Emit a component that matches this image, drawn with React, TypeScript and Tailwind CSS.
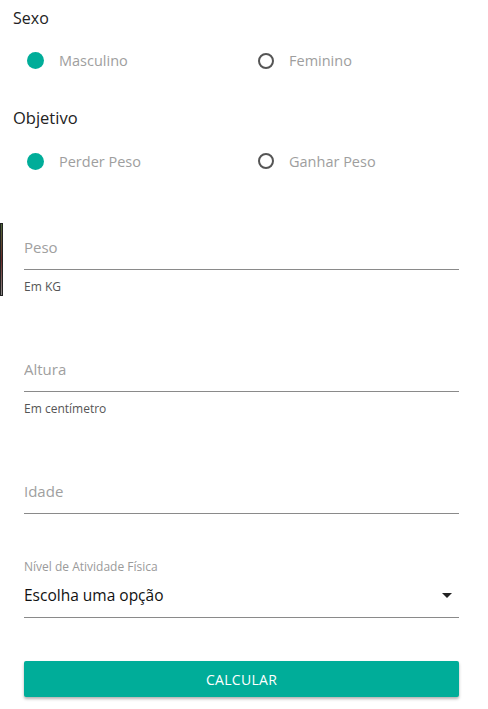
import { useState } from 'react';

type RadioProps = { label: string; checked: boolean; onClick: () => void };

function Radio({ label, checked, onClick }: RadioProps) {
  return (
    <button type="button" onClick={onClick} className="flex items-center gap-[15px] text-left">
      {checked ? (
        <span className="block size-[17px] rounded-full bg-[#00ad99]" />
      ) : (
        <span className="block size-[16px] rounded-full border-2 border-[#555]" />
      )}
      <span className="text-[14.5px] text-[#9e9e9e]">{label}</span>
    </button>
  );
}

function TextField({ label, hint }: { label: string; hint?: string }) {
  return (
    <div className="ml-6 mr-[29px] flex flex-col">
      <input
        placeholder={label}
        className="h-[45px] border-b border-[#8a8a8a] text-[15px] text-[#222] placeholder:text-[#a0a0a0] outline-none"
      />
      <p className="mt-[8px] h-[16px] text-[12px] text-[#555]">{hint}</p>
    </div>
  );
}

export default function App() {
  const [sexo, setSexo] = useState('m');
  const [objetivo, setObjetivo] = useState('perder');

  return (
    <div className="relative min-h-[709px] bg-white pb-3 font-['Open_Sans',sans-serif]">
      <div className="absolute left-0 top-[223px] h-[73px] w-[3px] border border-[#222] bg-gradient-to-b from-[#4a6b3a] via-[#6b2a2a] to-[#8a8a8a]" />

      <section className="px-[13px] pt-[6px]">
        <h2 className="text-[16px] text-[#222]">Sexo</h2>
        <div className="mt-[20px] flex pl-[14px]">
          <div className="w-[231px]">
            <Radio label="Masculino" checked={sexo === 'm'} onClick={() => setSexo('m')} />
          </div>
          <Radio label="Feminino" checked={sexo === 'f'} onClick={() => setSexo('f')} />
        </div>
      </section>

      <section className="px-[13px] pt-[34px]">
        <h2 className="text-[16.5px] text-[#222]">Objetivo</h2>
        <div className="mt-[20px] flex pl-[14px]">
          <div className="w-[231px]">
            <Radio label="Perder Peso" checked={objetivo === 'perder'} onClick={() => setObjetivo('perder')} />
          </div>
          <Radio label="Ganhar Peso" checked={objetivo === 'ganhar'} onClick={() => setObjetivo('ganhar')} />
        </div>
      </section>

      <div className="mt-[53px] flex flex-col gap-[53px]">
        <TextField label="Peso" hint="Em KG" />
        <TextField label="Altura" hint="Em centímetro" />
        <TextField label="Idade" />
      </div>

      <div className="ml-6 mr-[29px] mt-[20px] flex flex-col">
        <label className="text-[12px] text-[#9a9a9a]">Nível de Atividade Física</label>
        <div className="flex h-[42px] items-center justify-between border-b border-[#8a8a8a] pb-[2px]">
          <span className="text-[15.5px] text-[#111]">Escolha uma opção</span>
          <svg width="10" height="5" viewBox="0 0 10 5" className="mr-[7px]">
            <path d="M0 0 L10 0 L5 5 Z" fill="#222" />
          </svg>
        </div>
      </div>

      <div className="ml-6 mr-[29px] mt-[43px]">
        <button
          type="button"
          className="h-[36px] w-full rounded-[2px] bg-[#00ad99] text-[14px] tracking-[0.3px] text-white shadow-[0_2px_3px_rgba(0,0,0,0.3)]"
        >
          CALCULAR
        </button>
      </div>
    </div>
  );
}
